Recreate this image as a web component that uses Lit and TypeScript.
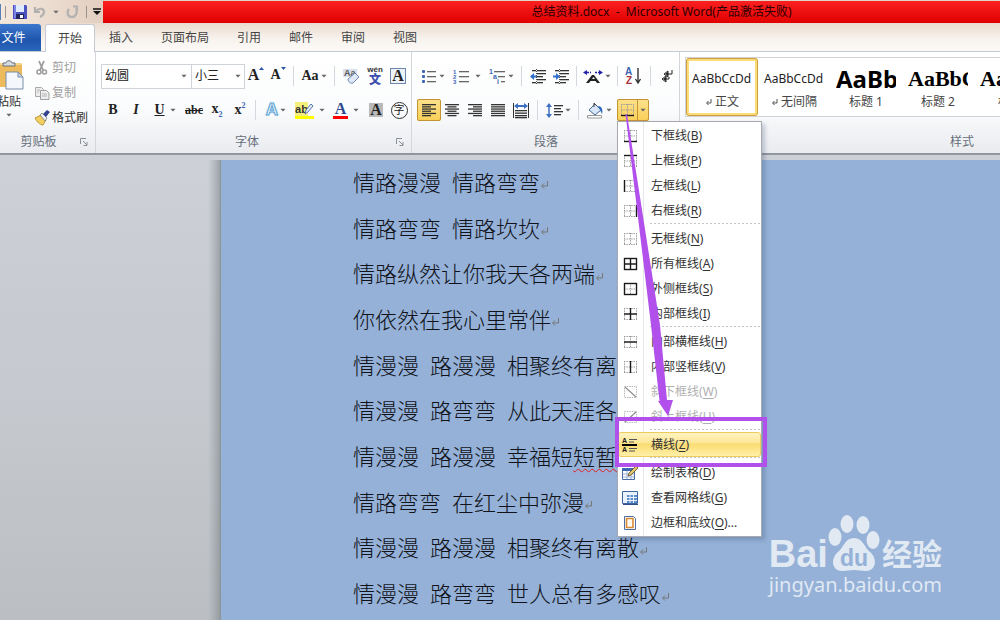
import { LitElement, html, css, svg, nothing } from "lit";
import { customElement } from "lit/decorators.js";
import { classMap } from "lit/directives/class-map.js";

const icon = (w: number, h: number, body: unknown) =>
  html`<svg width=${w} height=${h} viewBox="0 0 ${w} ${h}" aria-hidden="true">${body}</svg>`;

const caret = html`<svg class="caret" width="6" height="4" viewBox="0 0 7 4" aria-hidden="true"><path d="M0.5 0.5h6L3.5 3.8z" fill="#666" /></svg>`;

const rows = (list: number[][], color = "#333") =>
  list.map(([x, y, w]) => svg`<rect x=${x} y=${y} width=${w} height="1.3" fill=${color} />`);

/* Paragraph alignment: six rules, alternately long and short. */
const align = (mode: string) =>
  icon(16, 14, rows([0, 1, 2, 3, 4, 5].map((i) => {
    const w = mode === "justify" || i % 2 === 0 ? 14 : 9;
    const x = mode === "center" ? 1 + (14 - w) / 2 : mode === "right" ? 15 - w : 1;
    return [x, 1 + i * 2.2, w];
  })));

/* Border icon: dotted 2x2 grid with solid edges laid over it. */
const grid = (edges = "", color = "#1a1a1a") => {
  const seg: Record<string, string> = {
    b: "M1 12.5h13", t: "M1 1.5h13", l: "M1.5 1v12", r: "M13.5 1v12", h: "M1 7h13", v: "M7.5 1v12",
  };
  return icon(15, 14, svg`
    <path d="M1 1.5h13M1 7h13M1 12.5h13M1.5 1v12M7.5 1v12M13.5 1v12" stroke="#9b9b9b" stroke-width="1" stroke-dasharray="1.4 1" fill="none" />
    ${[...edges].map((e) => svg`<path d=${seg[e]} stroke=${color} stroke-width="1.4" fill="none" />`)}`);
};
const diagonal = (d: string) => icon(15, 14, svg`
  <path d="M1.5 1.5h12v11h-12z" stroke="#b5b5b5" stroke-dasharray="1.4 1" fill="none" />
  <path d=${d} stroke="#8f8f8f" stroke-width="1.2" />`);

const ic = {
  save: icon(16, 16, svg`<path d="M1 1h13l1 1v13H1z" fill="#4a52c0" /><path d="M2 1h2v13H2z" fill="#7b83e6" /><path d="M4 1h8v7H4z" fill="#dfeafc" /><path d="M4 10h8v5H4z" fill="#22265f" /><path d="M8 11h3v3H8z" fill="#fff" />`),
  undo: icon(14, 14, svg`<path d="M2 2v5h5M3 6c4-4 8-2 8 1 0 2-2 4-4 5" fill="none" stroke="#b3b0b0" stroke-width="2.2" />`),
  redo: icon(14, 14, svg`<path d="M8 1.5h4v4M11 3c2 4 0 9-4 9s-6-4-3-8" fill="none" stroke="#b3b0b0" stroke-width="2.2" />`),
  paste: icon(25, 32, svg`<path d="M0 4h20a2 2 0 0 1 2 2v22H0z" fill="#eebb5c" /><path d="M0 4h21v2H0z" fill="#f7d48c" /><path d="M3 7V4h3c0-3 6-3 6 0h3v3z" fill="#d9dde2" stroke="#68707a" /><path d="M6 13h12l5 5v12H6z" fill="#f4f8fd" stroke="#7b8ea8" /><path d="M18 13v5h5z" fill="#c9d6e8" stroke="#7b8ea8" />`),
  cut: icon(16, 16, svg`<path d="M5 1l4 9M10 1L6 10" stroke="#9b9b9b" stroke-width="1.8" fill="none" /><circle cx="5" cy="12" r="2" stroke="#9b9b9b" stroke-width="1.5" fill="none" /><circle cx="10.500" cy="12" r="2" stroke="#9b9b9b" stroke-width="1.5" fill="none" />`),
  copy: icon(16, 16, svg`<path d="M1.500 2.500h6l2 2v7h-8z" fill="#eee" stroke="#aaa" /><path d="M6.500 5.500h6l2.500 2.500v6.500h-8.500z" fill="#eee" stroke="#a0a0a0" /><path d="M8 9h5M8 11h5M3 5h3M3 7h2" stroke="#b5b5b5" />`),
  brush: icon(16, 16, svg`<path d="M1 8l6-3 5 5-3 5c-3 0-6-3-8-7z" fill="#f2cf5e" stroke="#a98527" stroke-width="0.8" /><path d="M6 5l2-2 5 5-2 3z" fill="#eef1f5" stroke="#777" stroke-width="0.8" /><path d="M9 4l4-4 3 2-4 5z" fill="#34458f" />`),
  clear: icon(18, 18, svg`<path d="M1 2h14v8H1z" fill="#6b89c5" opacity=".25" /><text x="2" y="9" font-size="9" font-weight="bold" font-family="Liberation Sans" fill="#555">Aa</text><path d="M6 12l7-6 4 4-6 6c-2 1-5-1-5-4z" fill="#dfe8f6" stroke="#6d86b5" />`),
  scale: icon(20, 15, svg`<path d="M3 14l6-8h2l6 8h-3l-1.500-2h-5L6 14zM9 10h3L10.500 8z" fill="#222" fill-rule="evenodd" /><path d="M0 3.500L4 1v5zM20 3.500L16 1v5z" fill="#2323a8" /><path d="M4 3.500h4M12 3.500h4" stroke="#2323a8" stroke-width="1.4" stroke-dasharray="2 1" />`),
  sort: icon(18, 18, svg`<text x="0" y="8" font-size="10" font-weight="bold" font-family="Liberation Sans" fill="#3c66b4">A</text><text x="1" y="17" font-size="10" font-weight="bold" font-family="Liberation Sans" fill="#a8323e">Z</text><path d="M13 1v14M10.500 12l2.500 4 2.500-4" stroke="#333" stroke-width="1.400" fill="none" />`),
  marks: icon(14, 14, svg`<path d="M12 1v4H8M8 2v6L4 5zM6 7v6L2 10zM6 10h3V8" stroke="#222" stroke-width="1" fill="none" /><path d="M8 3v4L5 5zM6 8v4L3 10z" fill="#222" />`),
  spacing: icon(17, 17, svg`<path d="M3 2v13" stroke="#3c6fc2" stroke-width="1.500" /><path d="M0 5l3-4 3 4zM0 12l3 4 3-4z" fill="#3c6fc2" />${rows([[8, 3, 9], [8, 6, 7], [8, 9, 9], [8, 12, 7]])}`),
  bucket: icon(18, 17, svg`<path d="M3 8l6-6 6 6-6 5z" fill="#d8e6f8" stroke="#42648f" /><path d="M8 5V1l3 3" stroke="#444" fill="none" /><path d="M12 4c4 0 5 4 4 8l-2-4z" fill="#2f6ac0" /><path d="M1.500 13.500h14v2.500h-14z" fill="#fff" stroke="#999" />`),
  pen: icon(10, 13, svg`<path d="M1 12l1-4 5-6 2 2-5 6z" fill="#dfe9f7" stroke="#5a77ab" />`),
  grow: icon(5, 3, svg`<path d="M0 3h5L2.500 0z" fill="#2f55a8" />`),
  shrink: icon(5, 3, svg`<path d="M0 0h5L2.500 3z" fill="#2f55a8" />`),
  hline: icon(16, 16, svg`<text x="0" y="6" font-size="7" font-weight="bold" font-family="Liberation Sans" fill="#222">A</text><text x="0" y="15" font-size="7" font-weight="bold" font-family="Liberation Sans" fill="#222">A</text><path d="M7 2.500h8M7 5h5M7 11.500h8M7 14h6" stroke="#555" /><path d="M0 8h15" stroke="#000" stroke-width="2" />`),
  draw: icon(18, 16, svg`<path d="M1.500 3.500h12v11h-12z" fill="#fff" stroke="#4c6ea5" /><path d="M1 3h13v3H1z" fill="#3d67ae" /><path d="M2 9h11M2 12h11M6 6v8M10 6v8" stroke="#9cb4d8" /><path d="M7 11l1-3 7-7 2 2-7 7z" fill="#e3c56c" stroke="#5c4a26" stroke-width=".8" />`),
  table: icon(16, 16, svg`<path d="M.5 1.500h15v12h-15z" fill="#eaf2fc" stroke="#3f65a0" /><path d="M4 4h11v9H4z" fill="#5d8ccb" /><path d="M1 4.500h14M1 7.500h14M1 10.500h14M4.500 2v11M8 2v11M11.500 2v11" stroke="#eaf2fc" /><path d="M1 14.500h15" stroke="#2f4f85" />`),
  page: icon(16, 16, svg`<path d="M2.500 1.500h9l2 2v11h-11z" fill="#fff" stroke="#4c6ea5" /><path d="M4.500 3.500h6.500v9h-6.500z" fill="#fffaf0" stroke="#d98b32" stroke-width="1.600" />`),
  launcher: icon(8, 8, svg`<path d="M.5 6V.5H6" stroke="#8b9097" fill="none" /><path d="M3 3l4 4M7 4v3.500H3.500" stroke="#8b9097" fill="none" />`),
  enter: icon(9, 9, svg`<path d="M7.500 1v5H2M4 3.500L1.500 6 4 8.500" stroke="#777" fill="none" />`),
};

const bullets = icon(16, 15, svg`${[1, 6, 11].map((y) => svg`<rect x="1" y=${y} width="3" height="3" rx="1" fill="#3c66b4" />`)}${rows([[6, 2, 9], [6, 7, 9], [6, 12, 9]], "#666")}`);
const numbers = icon(17, 17, svg`${["1", "2", "3"].map((n, i) => svg`<text x="0" y=${6 + i * 5} font-size="6" font-weight="bold" font-family="Liberation Sans" fill="#3c66b4">${n}</text>`)}${rows([[6, 3, 10], [6, 8, 10], [6, 13, 10]], "#666")}`);
const levels = icon(17, 17, svg`<g font-size="7" font-weight="bold" font-family="Liberation Sans" fill="#3c66b4"><text x="0" y="6">1</text><text x="4" y="11">a</text><text x="8" y="16">i</text></g>${rows([[5, 3, 11], [9, 8, 7], [12, 13, 4]], "#666")}`);
const indent = (out: boolean) => icon(17, 15, svg`${rows([[2, 1, 4], [7, 1, 9], [7, 4, 9], [7, 7, 6], [7, 10, 9], [2, 13, 4], [7, 13, 6]])}<path d=${out ? "M0 7.500L4 4v2.500h3v2H4V11z" : "M7 7.500L3 4v2.500H0v2h3V11z"} fill="#2f6fd0" /><path d="M6.500 0v15" stroke="#555" stroke-dasharray="1 1" />`);
const distribute = icon(18, 17, svg`<path d="M1.500 1v15M16.500 1v15" stroke="#333" /><path d="M2 4l4-3v2h6V1l4 3-4 3V5H6v2z" fill="#3c6fc2" />${rows([[3, 8, 12], [3, 10.500, 12], [3, 13, 12], [3, 15, 12]])}`);

type Item = { label: string; key: string; icon: unknown; off?: boolean; hot?: boolean; tail?: string };
const MENU: Item[][] = [
  [
    { label: "下框线", key: "B", icon: grid("b") },
    { label: "上框线", key: "P", icon: grid("t") },
    { label: "左框线", key: "L", icon: grid("l") },
    { label: "右框线", key: "R", icon: grid("r") },
  ],
  [
    { label: "无框线", key: "N", icon: grid() },
    { label: "所有框线", key: "A", icon: grid("btlrhv") },
    { label: "外侧框线", key: "S", icon: grid("btlr") },
    { label: "内部框线", key: "I", icon: grid("hv") },
  ],
  [
    { label: "内部横框线", key: "H", icon: grid("h") },
    { label: "内部竖框线", key: "V", icon: grid("v") },
    { label: "斜下框线", key: "W", icon: diagonal("M2 2l11 10"), off: true },
    { label: "斜上框线", key: "U", icon: diagonal("M2 12L13 2"), off: true },
  ],
  [{ label: "横线", key: "Z", icon: ic.hline, hot: true }],
  [
    { label: "绘制表格", key: "D", icon: ic.draw },
    { label: "查看网格线", key: "G", icon: ic.table },
    { label: "边框和底纹", key: "O", icon: ic.page, tail: "..." },
  ],
];

@customElement("border-menu")
export class BorderMenu extends LitElement {
  static styles = css`
    :host { display: block; padding: 1px 0; background: linear-gradient(90deg, #fff 25px, #e4e6e9 25px, #e4e6e9 26px, #fff 26px); border: 1px solid #a7abb0; box-shadow: 3px 3px 4px #2a3f6640; }
    .group + .group { padding-top: 3px; background: repeating-linear-gradient(90deg, #c3c6ca 0 2px, transparent 2px 4px) 32px 0 / 110px 1px no-repeat; }
    .item { display: flex; align-items: center; width: 100%; height: 25px; padding: 0; border: 1px solid transparent; border-radius: 3px; background: none; font: inherit; color: #333; text-align: left; }
    .item:disabled { color: #b0b0b0; }
    .hot { border-color: #efcb5c; background: linear-gradient(#fff3c0, #fde89a 40%, #fbdc72 50%, #fff0a8); }
    .icon { display: flex; justify-content: center; width: 22px; margin-right: 10px; }
    u { text-underline-offset: 2px; }
  `;
  render() {
    return MENU.map((g) => html`<div class="group" role="group">
      ${g.map((i) => html`<button class=${classMap({ item: true, hot: !!i.hot })} role="menuitem" ?disabled=${i.off}>
        <span class="icon">${i.icon}</span><span>${i.label}(<u>${i.key}</u>)${i.tail ?? nothing}</span>
      </button>`)}
    </div>`);
  }
}

const POEM: { words: string[]; wavy?: string; mark?: boolean }[] = [
  { words: ["情路漫漫", "情路弯弯"], mark: true },
  { words: ["情路弯弯", "情路坎坎"], mark: true },
  { words: ["情路纵然让你我天各两端"], mark: true },
  { words: ["你依然在我心里常伴"], mark: true },
  { words: ["情漫漫", "路漫漫", "相聚终有离"] },
  { words: ["情漫漫", "路弯弯", "从此天涯各"] },
  { words: ["情漫漫", "路漫漫", "幸福短"], wavy: "短暂" },
  { words: ["情路弯弯", "在红尘中弥漫"], mark: true },
  { words: ["情漫漫", "路漫漫", "相聚终有离散"], mark: true },
  { words: ["情漫漫", "路弯弯", "世人总有多感叹"], mark: true },
];

const STYLES = [
  { sample: "AaBbCcDd", name: "正文", cls: "", ret: true },
  { sample: "AaBbCcDd", name: "无间隔", cls: "", ret: true },
  { sample: "AaBb", name: "标题 1", cls: "h1", ret: false },
  { sample: "AaBbC", name: "标题 2", cls: "h2", ret: false },
  { sample: "AaBbC", name: "标题", cls: "h2", ret: false },
];

@customElement("app-root")
export class AppRoot extends LitElement {
  static styles = css`
    :host { display: flex; flex-direction: column; position: relative; height: 100vh; overflow: hidden; font: 12px/16px "Noto Sans", "Noto Sans CJK SC", sans-serif; color: #333; background: #fff; }
    button, select { font: inherit; color: inherit; }
    button { display: inline-flex; align-items: center; justify-content: center; padding: 0; border: 0; background: none; flex: none; }
    svg { display: block; flex: none; }
    header { display: flex; height: 23px; flex: none; background: #e2d2c6; }
    .quick { display: flex; align-items: center; width: 103px; flex: none; background: linear-gradient(90deg, #f3e8dd, #e2cfc1); }
    .quick .edge { width: 2px; height: 16px; box-sizing: border-box; border: 1px solid #5a7fb8; border-left: 0; background: #fff; }
    .quick button { width: 20px; height: 20px; }
    .quick .thin { width: 12px; }
    .vr { width: 1px; height: 12px; margin: 0 4px; background: #9b938c; flex: none; }
    .title { flex: 1; display: flex; align-items: center; justify-content: center; margin-top: 1px; padding-left: 22%; background: linear-gradient(#fb2020, #e00000); color: #2c0000; white-space: pre; }
    nav { display: flex; align-items: flex-end; height: 28px; flex: none; background: linear-gradient(#eadbd0, #f8f3ee 60%, #fbf9f7); border-bottom: 1px solid #c5cad2; }
    nav a { display: flex; align-items: center; justify-content: center; height: 27px; margin-right: 4px; padding: 0 12px; color: #444; text-decoration: none; }
    nav a.file { width: 41px; box-sizing: border-box; padding: 0 14px 0 0; border-radius: 0 3px 0 0; background: linear-gradient(#3b78cd, #1f55ac 60%, #2a67bd); color: #fff; white-space: nowrap; }
    nav a.on { margin: 0 2px -1px 0; border: 1px solid #c5cad2; border-bottom: 0; border-radius: 3px 3px 0 0; background: #fff; }
    .ribbon { display: flex; flex: none; height: 101px; background: linear-gradient(#fff, #fbfcfd 55%, #e9ebef); border-bottom: 2px solid #92969e; overflow: hidden; }
    .box { display: flex; flex-direction: column; flex: none; box-sizing: border-box; border-right: 1px solid #d3d6da; padding: 7px 4px 0 5px; }
    .box.clip { width: 96px; padding-left: 0; }
    .box.font { width: 316px; }
    .box.para { width: 268px; }
    .box.styles { flex: 1; min-width: 560px; padding-top: 5px; padding-right: 0; }
    .row { display: flex; align-items: center; height: 34px; }
    .cap { display: flex; align-items: center; margin-top: auto; height: 22px; color: #666e7a; text-align: center; }
    .cap span { flex: 1; }
    .cap button { width: 14px; height: 14px; }
    .paste { flex-direction: column; align-items: flex-start; justify-content: flex-start; width: 34px; }
    .paste .word { margin: 3px 0 3px -3px; }
    .paste .caret { margin-left: 6px; }
    .clipbody { display: flex; height: 72px; }
    .cmds { display: flex; flex-direction: column; margin-top: -4px; }
    .cmds button { height: 25px; gap: 2px; justify-content: flex-start; }
    .cmds button:disabled { color: #a0a0a0; }
    .combo { position: relative; display: flex; align-items: center; }
    select { appearance: none; height: 25px; box-sizing: border-box; border: 1px solid #cfd4da; border-radius: 0; background: #fff; padding: 0 3px; color: #222; }
    .combo .caret { position: absolute; right: 4px; }
    .face { width: 91px; margin-right: -1px; }
    .size { width: 54px; }
    .b22 { width: 22px; } .b24 { width: 24px; }
    .drop { gap: 2px; }
    .d32 { width: 32px; }
    .d36 { width: 36px; gap: 5px; }
    .row button { height: 22px; }
    .sep { width: 1px; height: 20px; margin: 0 4px; background: #d5d9df; flex: none; }
    .serif { font-family: "Liberation Serif", serif; font-weight: 700; font-size: 16px; color: #222; }
    .small { font-size: 14px; }
    .row .nudge { align-items: flex-start; padding-top: 2px; box-sizing: border-box; }
    sub, sup { font-size: 8px; line-height: 8px; color: #3c66b4; }
    .glow { color: #f4faff; font: 700 17px/20px "Liberation Sans", sans-serif; -webkit-text-stroke: 1px #58a0d2; text-shadow: 0 0 2px #8ac4ea; }
    .bar { display: flex; line-height: 14px; border-bottom: 3px solid #f00; padding: 0 2px; color: #2d4b8e; }
    .bar.yellow { border-color: #ff0; font: 700 11px/14px "Liberation Sans", sans-serif; color: #333; padding: 0; }
    .bar.yellow span { background: #f4ef7c; }
    .bar.yellow svg { margin-left: -4px; }
    .framed { border: 1px solid #6c86ad; background: #eef3fa; line-height: 14px; padding: 0 1px; }
    .shaded { background: #b9b9b9; line-height: 14px; padding: 0 1px; }
    .ring { border: 1px solid #333; border-radius: 50%; width: 15px; height: 15px; line-height: 14px; color: #222; font-size: 11px; }
    .pinyin { display: flex; flex-direction: column; font: 700 8px/9px "Liberation Sans", "Noto Sans CJK SC", sans-serif; }
    .pinyin b { font-size: 12px; line-height: 13px; color: #3d4fae; }
    .strike { text-decoration: line-through; font-size: 12px; }
    .row .lit { background: linear-gradient(#fde18c, #f9cf57); outline: 1px solid #c39434; outline-offset: -1px; border-radius: 2px; }
    .row .split { width: 32px; margin-left: 2px; gap: 5px; background: linear-gradient(90deg, transparent 20px, #c39434 20px, #c39434 21px, transparent 21px), linear-gradient(#fde18c, #f9cf57); }
    .gallery { display: flex; height: 58px; border: 1px solid #d0d3d8; border-right: 0; background: #fff; }
    .style { flex-direction: column; width: 72px; height: 58px; padding: 0 5px; box-sizing: border-box; }
    .style.on { border: 3px solid #fbdc78; border-radius: 3px; outline: 1px solid #d0a040; outline-offset: -1px; padding: 0 2px; }
    .sample { display: block; width: 60px; height: 30px; line-height: 30px; overflow: hidden; text-align: left; color: #222; }
    .h1 { font-size: 24px; font-weight: 700; color: #000; }
    .h2 { font: 700 22px/30px "Liberation Serif", serif; color: #000; }
    .name { display: flex; align-items: center; gap: 3px; color: #444; }
    main { flex: 1; display: flex; min-height: 460px; padding-top: 5px; background: linear-gradient(#cdd1d7, #c4c8cd 60%, #bbbfc4); }
    .gutter { width: 221px; flex: none; background: linear-gradient(90deg, transparent 208px, #7d868a88 219px, #8a9296 221px); }
    article { flex: 1; display: grid; grid-auto-rows: 1fr; padding: 0 0 3px 132px; background: #95b1d7; font: 300 22px/30px "Noto Sans CJK SC", sans-serif; color: #10131a; }
    .line { display: flex; align-items: center; gap: 11px; margin: 0; }
    .line > span { margin-top: -4px; }
    .line svg { margin: 4px 0 0 -11px; }
    .wavy { text-decoration: underline wavy #e02020 1px; text-underline-offset: 3px; }
    border-menu { position: absolute; left: 617px; top: 121px; width: 145px; box-sizing: border-box; }
    .pointer { position: absolute; left: 610px; top: 108px; }
    .brand { position: absolute; right: 58px; bottom: 22px; color: #ffffffb8; }
    .logo { display: flex; align-items: flex-end; height: 60px; font: 700 38px/36px "Liberation Sans", sans-serif; }
    .logo svg { margin-left: 0; }
    .logo .cn { font: 700 30px/40px "Noto Sans CJK SC", sans-serif; }
    .site { font-size: 20px; line-height: 26px; }
  `;

  private b(label: string, w: string, body: unknown, drop = false) {
    return html`<button class="${w} ${drop ? "drop" : ""}" aria-label=${label}>${body}${drop ? caret : nothing}</button>`;
  }

  render() {
    const sep = html`<span class="sep"></span>`;
    return html`
      <header>
        <div class="quick">
          <span class="edge"></span><span class="vr"></span>
          <button aria-label="保存">${ic.save}</button>
          <button aria-label="撤消">${ic.undo}</button>
          <button class="thin" aria-label="撤消列表">${caret}</button>
          <button aria-label="恢复">${ic.redo}</button>
          <span class="vr"></span>
          <button class="thin" aria-label="自定义快速访问工具栏">${icon(8, 7, svg`<path d="M0 1h8" stroke="#111" stroke-width="1.500" /><path d="M0 3h8L4 7z" fill="#111" />`)}</button>
        </div>
        <div class="title">总结资料.docx  -  Microsoft Word(产品激活失败)</div>
      </header>
      <nav>
        <a class="file" href="#file">文件</a>
        <a class="on" href="#home">开始</a>
        ${["插入", "页面布局", "引用", "邮件", "审阅", "视图"].map((t) => html`<a href="#${t}">${t}</a>`)}
      </nav>
      <section class="ribbon">
        <div class="box clip">
          <div class="clipbody">
            <button class="paste">${ic.paste}<span class="word">粘贴</span>${caret}</button>
            <div class="cmds">
              <button disabled>${ic.cut}剪切</button>
              <button disabled>${ic.copy}复制</button>
              <button>${ic.brush}格式刷</button>
            </div>
          </div>
          <div class="cap"><span>剪贴板</span><button aria-label="剪贴板选项">${ic.launcher}</button></div>
        </div>
        <div class="box font">
          <div class="row">
            <label class="combo"><select class="face" aria-label="字体"><option>幼圆</option></select>${caret}</label>
            <label class="combo"><select class="size" aria-label="字号"><option>小三</option></select>${caret}</label>
            ${this.b("增大字体", "b22 nudge", html`<span class="serif">A</span>${ic.grow}`)}
            ${this.b("缩小字体", "b22 nudge", html`<span class="serif small">A</span>${ic.shrink}`)}
            ${sep}
            ${this.b("更改大小写", "d32", html`<span class="serif small">Aa</span>`, true)}
            ${sep}
            ${this.b("清除格式", "b24", ic.clear)}
            ${this.b("拼音指南", "b24", html`<span class="pinyin">wén<b>文</b></span>`)}
            ${this.b("字符边框", "b22", html`<span class="serif framed">A</span>`)}
          </div>
          <div class="row">
            ${this.b("加粗", "b24", html`<span class="serif small">B</span>`)}
            ${this.b("倾斜", "b22", html`<span class="serif small"><i>I</i></span>`)}
            ${this.b("下划线", "d36", html`<span class="serif small"><u>U</u></span>`, true)}
            ${this.b("删除线", "b22", html`<span class="serif strike">abc</span>`)}
            ${this.b("下标", "b24", html`<span class="serif small">x<sub>2</sub></span>`)}
            ${this.b("上标", "b22", html`<span class="serif small">x<sup>2</sup></span>`)}
            ${sep}
            ${this.b("文本效果", "d32", html`<span class="glow">A</span>`, true)}
            ${this.b("突出显示", "d36", html`<span class="bar yellow"><span>ab</span>${ic.pen}</span>`, true)}
            ${this.b("字体颜色", "d36", html`<span class="serif bar">A</span>`, true)}
            ${this.b("字符底纹", "b24", html`<span class="serif shaded">A</span>`)}
            ${this.b("带圈字符", "b22", html`<span class="ring">字</span>`)}
          </div>
          <div class="cap"><span>字体</span><button aria-label="字体选项">${ic.launcher}</button></div>
        </div>
        <div class="box para">
          <div class="row">
            ${this.b("项目符号", "d32", bullets, true)}
            ${this.b("编号", "d36", numbers, true)}
            ${this.b("多级列表", "d32", levels, true)}
            ${sep}
            ${this.b("减少缩进", "b24", indent(true))}
            ${this.b("增加缩进", "b22", indent(false))}
            ${sep}
            ${this.b("中文版式", "d32", ic.scale, true)}
            ${sep}
            ${this.b("排序", "b24", ic.sort)}
            ${sep}
            ${this.b("显示标记", "b24", ic.marks)}
          </div>
          <div class="row">
            ${this.b("左对齐", "b24 lit", align("left"))}
            ${this.b("居中", "b22", align("center"))}
            ${this.b("右对齐", "b24", align("right"))}
            ${this.b("两端对齐", "b22", align("justify"))}
            ${this.b("分散对齐", "b24", distribute)}
            ${sep}
            ${this.b("行距", "d32", ic.spacing, true)}
            ${sep}
            ${this.b("底纹", "d32", ic.bucket, true)}
            ${this.b("框线", "lit split", grid("b"), true)}
          </div>
          <div class="cap"><span>段落</span></div>
        </div>
        <div class="box styles">
          <div class="gallery">
            ${STYLES.map((s, i) => html`<button class=${classMap({ style: true, on: i === 0 })}>
              <span class="sample ${s.cls}">${s.sample}</span>
              <span class="name">${s.ret ? icon(7, 8, svg`<path d="M6 1v4H2M3.500 3L1.500 5l2 2" stroke="#555" fill="none" />`) : nothing}${s.name}</span>
            </button>`)}
          </div>
          <div class="cap"><span>样式</span></div>
        </div>
      </section>
      <main>
        <div class="gutter"></div>
        <article>
          ${POEM.map((l) => html`<p class="line">${l.words.map((w, i) => html`<span>${w}${l.wavy && i === l.words.length - 1 ? html`<span class="wavy">${l.wavy}</span>` : nothing}</span>`)}${l.mark ? ic.enter : nothing}</p>`)}
        </article>
      </main>
      <div class="brand">
        <div class="logo">
          Bai<svg width="54" height="58" viewBox="0 0 54 58" aria-hidden="true">
            <g fill="#fff" opacity=".72">
              <ellipse cx="7" cy="23" rx="6.500" ry="9" /><ellipse cx="19" cy="10" rx="6.500" ry="9" />
              <ellipse cx="35" cy="11" rx="6.500" ry="9" /><ellipse cx="45" cy="26" rx="6.500" ry="9" />
              <path d="M26 24c-9 0-10 9-16 14-8 7-6 19 4 19 5 0 7-1 12-1s7 1 12 1c10 0 12-12 4-19-6-5-7-14-16-14z" />
            </g>
            <text x="26" y="52" text-anchor="middle" font-size="23" font-weight="bold" font-family="Liberation Sans" fill="#95b1d7">du</text>
          </svg><span class="cn">经验</span>
        </div>
        <div class="site">jingyan.baidu.com</div>
      </div>
      <border-menu role="menu"></border-menu>
      <svg class="pointer" width="158" height="362" viewBox="0 0 158 362" aria-hidden="true">
        <path d="M15.500 6L17 6 50 217 57 292 63 292 58 308 48 293 49.500 293 41 217z" fill="#b250ec" />
        <path d="M7 311h148v46H7z" fill="none" stroke="#b250ec" stroke-width="4" />
      </svg>
    `;
  }
}
